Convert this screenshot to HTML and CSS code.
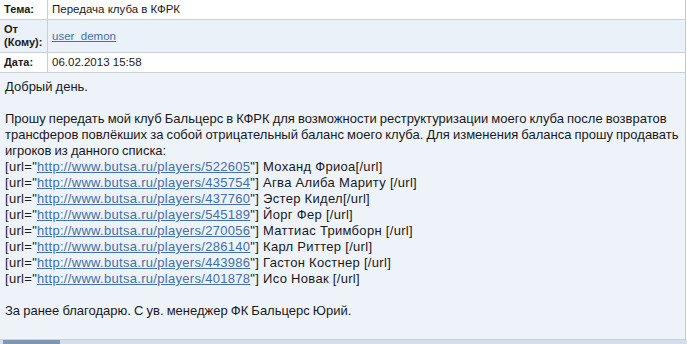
FILE: index.html
```html
<!DOCTYPE html>
<html lang="ru">
<head>
    <meta charset="UTF-8">
    <title>Сообщение</title>
    <link rel="stylesheet" href="styles.css">
</head>
<body>
    <div class="message">
        <div class="field">
            <div class="field-label">Тема:</div>
            <div class="field-value">Передача клуба в КФРК</div>
        </div>
        <div class="field field-alt">
            <div class="field-label">От (Кому):</div>
            <div class="field-value"><a href="#">user_demon</a></div>
        </div>
        <div class="field">
            <div class="field-label">Дата:</div>
            <div class="field-value">06.02.2013 15:58</div>
        </div>
        <div class="message-body">
            <p>Добрый день.</p>
            <p>Прошу передать мой клуб Бальцерс в КФРК для возможности реструктуризации моего клуба после возвратов трансферов повлёкших за собой отрицательный баланс моего клуба. Для изменения баланса прошу продавать игроков из данного списка:<br>
            <span class="bb">[url="<a href="#">http://www.butsa.ru/players/522605</a>"] Моханд Фриоа[/url]</span><br>
            <span class="bb">[url="<a href="#">http://www.butsa.ru/players/435754</a>"] Агва Алиба Мариту [/url]</span><br>
            <span class="bb">[url="<a href="#">http://www.butsa.ru/players/437760</a>"] Эстер Кидел[/url]</span><br>
            <span class="bb">[url="<a href="#">http://www.butsa.ru/players/545189</a>"] Йорг Фер [/url]</span><br>
            <span class="bb">[url="<a href="#">http://www.butsa.ru/players/270056</a>"] Маттиас Тримборн [/url]</span><br>
            <span class="bb">[url="<a href="#">http://www.butsa.ru/players/286140</a>"] Карл Риттер [/url]</span><br>
            <span class="bb">[url="<a href="#">http://www.butsa.ru/players/443986</a>"] Гастон Костнер [/url]</span><br>
            <span class="bb">[url="<a href="#">http://www.butsa.ru/players/401878</a>"] Исо Новак [/url]</span></p>
            <p>За ранее благодарю. С ув. менеджер ФК Бальцерс Юрий.</p>
        </div>
    </div>
    <div class="tabs"><span class="tab"></span></div>
</body>
</html>
```

FILE: styles.css
```css
body {
    margin: 0;
    background: #ffffff;
    font-family: "Liberation Sans", Arial, sans-serif;
    color: #1a1a1a;
}

a {
    color: #4270aa;
}

.message {
    width: 685px;
    border-right: 1px solid #c3c9d0;
}

.field {
    display: grid;
    grid-template-columns: 48px 1fr;
    background: #ffffff;
    border-bottom: 1px solid #c9d0d8;
    font-size: 11px;
}

.field-alt {
    background: #ebf1f8;
}

.field-label {
    padding: 3px 0 3px 4px;
    font-weight: bold;
    border-right: 1px solid #c9d0d8;
    line-height: 13px;
}

.field-value {
    padding: 3px 4px;
    display: flex;
    align-items: center;
    line-height: 13px;
    font-size: 11.5px;
}

.message-body {
    background: #eef3fa;
    height: 260px;
    padding: 6px 2px 0 5px;
    font-size: 13px;
    line-height: 16px;
    word-spacing: -0.5px;
    border-bottom: 1px solid #c9d3de;
}

.message-body p {
    margin: 0 0 16px;
}

.bb {
    letter-spacing: 0.3px;
    word-spacing: 0;
}

.tabs {
    height: 5px;
    background: #d4dfeb;
    padding-left: 3px;
}

.tab {
    display: block;
    width: 57px;
    height: 5px;
    background: #7c96b4;
}
```
